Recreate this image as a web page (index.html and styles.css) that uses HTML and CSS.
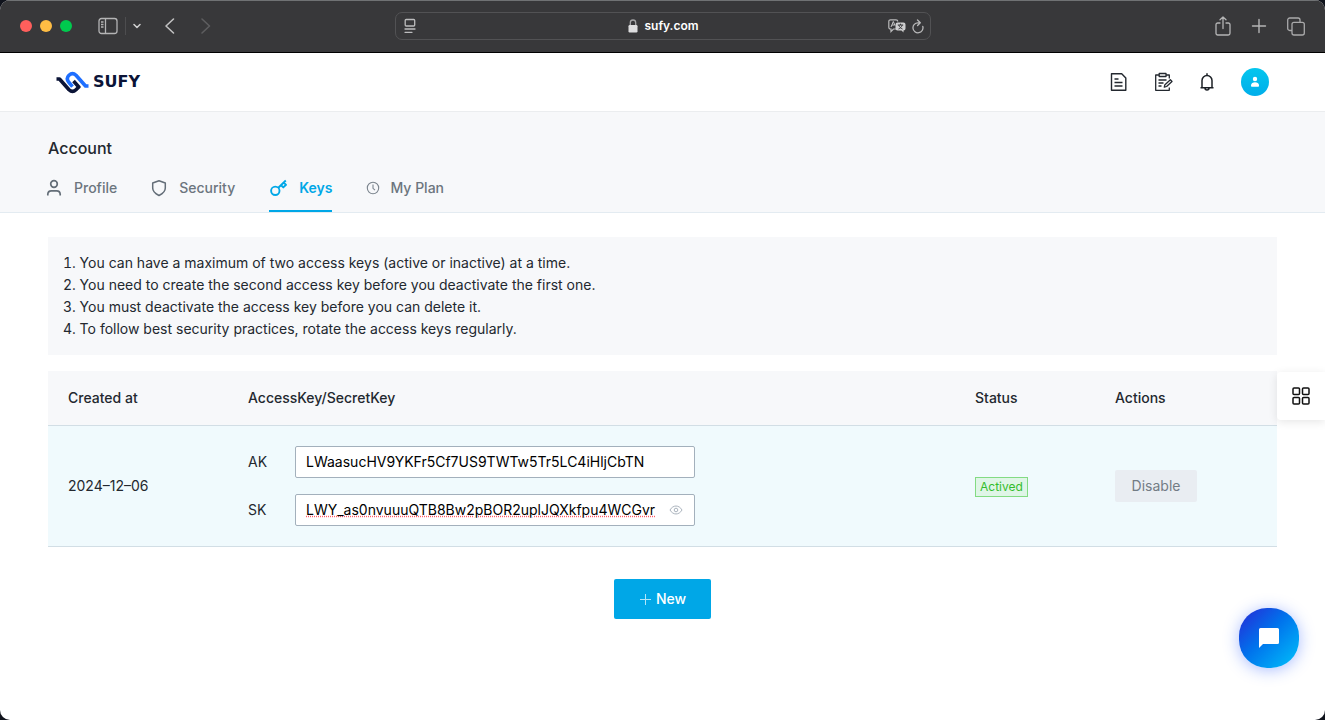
FILE: index.html
```html
<!DOCTYPE html>
<html lang="en">
<head>
<meta charset="utf-8">
<meta name="viewport" content="width=device-width, initial-scale=1">
<title>Account - Keys</title>
<link rel="stylesheet" href="styles.css">
</head>
<body>
<div class="window">
  <div class="toolbar">
    <div class="toolbar-left">
      <span class="lights"><i class="light red"></i><i class="light yellow"></i><i class="light green"></i></span>
      <button class="tool" aria-label="Sidebar"><svg width="20" height="18" viewBox="0 0 20 18" fill="none" stroke="#b4b4b5" stroke-width="1.3"><rect x="1" y="1.5" width="18" height="15" rx="2.5"/><path d="M7.5 1.5v15M3 5h2.5M3 7.5h2.5M3 10h2.5"/></svg></button>
      <span class="tool-divider"></span>
      <button class="tool" aria-label="Tab groups"><svg width="8" height="8" viewBox="0 0 8 8" fill="none" stroke="#d0d0d1" stroke-width="1.5" stroke-linecap="round" stroke-linejoin="round"><path d="M1 2.5l3 3 3-3"/></svg></button>
      <button class="tool tool-back" aria-label="Back"><svg width="12" height="18" viewBox="0 0 12 18" fill="none" stroke="#c0c0c1" stroke-width="1.6" stroke-linecap="round" stroke-linejoin="round"><path d="M9.500 2L2 9l7.500 7"/></svg></button>
      <button class="tool tool-forward" aria-label="Forward" disabled><svg width="12" height="18" viewBox="0 0 12 18" fill="none" stroke="#5d5d5f" stroke-width="1.6" stroke-linecap="round" stroke-linejoin="round"><path d="M2 2l7.500 7L2 16"/></svg></button>
    </div>
    <div class="address">
      <button class="tool" aria-label="Reader"><svg width="12" height="16" viewBox="0 0 12 16" fill="none" stroke="#bdbdbe" stroke-width="1.3" stroke-linecap="round"><rect x="1.200" y="1.500" width="9.500" height="6.500" rx="1"/><path d="M1 11h10M1 14.300h7"/></svg></button>
      <span class="domain"><svg width="10" height="14" viewBox="0 0 10 14"><path d="M2.300 6V3.700a2.700 2.700 0 0 1 5.400 0V6" fill="none" stroke="#a5a5a6" stroke-width="1.3"/><rect x=".5" y="6" width="9" height="7.500" rx="1.200" fill="#dededf"/></svg>sufy.com</span>
      <span class="address-tools">
        <button class="tool" aria-label="Translate"><svg width="18" height="14" viewBox="0 0 18 14" fill="none"><path d="M8 10H5.500L3 12.500V10H2.500A1.700 1.700 0 0 1 .8 8.300V2.500A1.700 1.700 0 0 1 2.500.8H8a1.700 1.700 0 0 1 1.700 1.700" stroke="#b9b9ba" stroke-width="1.200"/><path d="M3 8l2.300-5.500L7 6.500M4 6h2.500" stroke="#c8c8c9"/><path d="M9.500 3.500h6A2 2 0 0 1 17.500 5.500v4a2 2 0 0 1-2 2v2l-2-2h-4a2 2 0 0 1-2-2v-4a2 2 0 0 1 2-2z" fill="#cfcfd0"/><path d="M9.800 6h5.400M12.500 4.700V6M10.800 6c.5 2 2 3.300 3.700 4M14.200 6c-.5 2-2 3.300-3.700 4" stroke="#38383a"/></svg></button>
        <button class="tool" aria-label="Reload"><svg width="12" height="15" viewBox="0 0 12 15" fill="none" stroke="#b9b9ba" stroke-width="1.3" stroke-linecap="round" stroke-linejoin="round"><path d="M10.800 7.500A5 5 0 1 1 6 3.800H8M5.500 1l2.800 2.800-2.700 2.700"/></svg></button>
      </span>
    </div>
    <div class="toolbar-right">
      <button class="tool" aria-label="Share"><svg width="16" height="20" viewBox="0 0 16 20" fill="none" stroke="#b4b4b5" stroke-width="1.300" stroke-linecap="round" stroke-linejoin="round"><path d="M5 7H2.700A1.700 1.700 0 0 0 1 8.700v8.600A1.700 1.700 0 0 0 2.700 19h10.600a1.700 1.700 0 0 0 1.700-1.700V8.700A1.700 1.700 0 0 0 13.300 7H11M8 12.500V1M5 3.800L8 1l3 2.800"/></svg></button>
      <button class="tool" aria-label="New tab"><svg width="16" height="16" viewBox="0 0 16 16" stroke="#b4b4b5" stroke-width="1.400" stroke-linecap="round"><path d="M8 1.500v13M1.500 8h13"/></svg></button>
      <button class="tool" aria-label="Tab overview"><svg width="18" height="19" viewBox="0 0 18 19" fill="none" stroke="#a9a9aa" stroke-width="1.300"><rect x="5" y="5.300" width="12.300" height="12.700" rx="2"/><path d="M5 13.500H2.700a2 2 0 0 1-2-2V3a2 2 0 0 1 2-2H11a2 2 0 0 1 2 2v2.300"/></svg></button>
    </div>
  </div>

  <header class="site-header">
    <a class="logo" href="#" aria-label="Sufy home">
      <svg width="33" height="23" viewBox="0 0 33 23" fill="none" stroke-width="3.600" stroke-linejoin="round"><path d="M.5 8H3.500L13 18.700q3.500 3.300 7 0L22.800 16l-5.300-6" stroke="#0b1437"/><path d="M32.500 15H29.500L20 4.300q-3.500-3.300-7 0c-2.400 2.400-2 5 0 7.200l3.500 4.200" stroke="#1f6fff"/></svg>
      <span class="wordmark">SUFY</span>
    </a>
    <nav class="header-actions" aria-label="Tools">
      <button class="icon-button" aria-label="Documents"><svg width="18" height="20" viewBox="0 0 18 20" fill="none" stroke="#23282f" stroke-width="1.400" stroke-linejoin="round"><path d="M2.500 1.700h10.200L16.800 6v12.300H2.500zM5.500 7h4M5.500 10.500h8M5.500 14h8"/></svg></button>
      <button class="icon-button" aria-label="Feedback"><svg width="20" height="20" viewBox="0 0 20 20" fill="none" stroke="#23282f" stroke-width="1.300" stroke-linejoin="round"><path d="M6 3H2.700v15.300h13.600V15.500M13 3h3.300v3.500M6.200 1.500H13v3H6.200zM5.500 8h8M5.500 11h5M5.500 14h3M11.300 15.200l.6-2.500 5.500-5 1.600 1.800-5.400 5z"/></svg></button>
      <button class="icon-button" aria-label="Notifications"><svg width="16" height="20" viewBox="0 0 16 20" fill="none" stroke="#1c2026" stroke-width="1.500"><path d="M1.500 15.800h13M3 15.800V8.500a5 5 0 0 1 10 0v7.300M8 3.500V1.300M6 16.200a2 1.700 0 0 0 4 0"/></svg></button>
      <button class="avatar" aria-label="User menu"><svg width="10" height="12" viewBox="0 0 10 12" fill="#fff"><circle cx="5" cy="3" r="2.200"/><path d="M1 9.200C1 7.500 3 6.300 5 6.300s4 1.200 4 2.900c0 1-.3 1.500-1.200 1.500H2.200C1.300 10.700 1 10.200 1 9.200z"/></svg></button>
    </nav>
  </header>

  <section class="account">
    <h1 class="account-title">Account</h1>
    <nav class="tabs" aria-label="Account">
      <a class="tab" href="#"><svg width="16" height="18" viewBox="0 0 16 18" fill="none" stroke="#646e78" stroke-width="1.700"><circle cx="8" cy="5" r="3.300"/><path d="M1.800 16.500v-1.300a3.500 3.500 0 0 1 3.500-3.400h5.400a3.500 3.500 0 0 1 3.500 3.400v1.300"/></svg>Profile</a>
      <a class="tab" href="#"><svg width="16" height="18" viewBox="0 0 16 18" fill="none" stroke="#646e78" stroke-width="1.500" stroke-linejoin="round"><path d="M8 1.700L14.300 4v5c0 3.300-2.600 5.700-6.300 7.500C4.300 14.700 1.700 12.300 1.700 9V4z"/></svg>Security</a>
      <a class="tab active" href="#" aria-current="page"><svg width="18" height="18" viewBox="0 0 18 18" fill="none" stroke="#00a7e7" stroke-width="1.900" stroke-linejoin="round"><circle cx="6.300" cy="11.800" r="4.200"/><path d="M9.300 8.800L16.800 1.500M12 6.200l2.300 2.200L17 5.800l-2.300-2.300"/></svg>Keys</a>
      <a class="tab tab-plan" href="#"><svg width="14" height="14" viewBox="0 0 14 14" fill="none" stroke="#7b848d" stroke-width="1.100"><circle cx="7" cy="7" r="5.700"/><path d="M7 3.500V7.300l2 1.900"/></svg>My Plan</a>
    </nav>
  </section>

  <main class="content">
    <ol class="notice">
      <li>You can have a maximum of two access keys (active or inactive) at a time.</li>
      <li>You need to create the second access key before you deactivate the first one.</li>
      <li>You must deactivate the access key before you can delete it.</li>
      <li>To follow best security practices, rotate the access keys regularly.</li>
    </ol>
    <table class="keys">
      <thead>
        <tr><th class="col-created">Created at</th><th>AccessKey/SecretKey</th><th class="col-status">Status</th><th class="col-actions">Actions</th></tr>
      </thead>
      <tbody>
        <tr>
          <td>2024–12–06</td>
          <td>
            <div class="pairs">
              <div class="pair"><label for="ak">AK</label><span class="field"><input id="ak" type="text" value="LWaasucHV9YKFr5Cf7US9TWTw5Tr5LC4iHljCbTN"></span></div>
              <div class="pair"><label for="sk">SK</label><span class="field"><input id="sk" class="misspelled" type="text" value="LWY_as0nvuuuQTB8Bw2pBOR2uplJQXkfpu4WCGvr"><button class="reveal" aria-label="Toggle visibility"><svg width="14" height="10" viewBox="0 0 14 10" fill="none" stroke="#aab3bd"><path d="M1 5c3-5.300 9-5.300 12 0-3 5.300-9 5.300-12 0z"/><circle cx="7" cy="5" r="1.800"/></svg></button></span></div>
            </div>
          </td>
          <td><span class="status">Actived</span></td>
          <td><button class="disable" disabled>Disable</button></td>
        </tr>
      </tbody>
    </table>
    <button class="new-key"><svg width="12" height="12" viewBox="0 0 12 12" stroke="#b3e5f8"><path d="M6.500 1v11M1 6.500h11"/></svg>New</button>
  </main>

  <button class="side-widget" aria-label="Apps"><svg width="18" height="18" viewBox="0 0 18 18" fill="none" stroke="#111" stroke-width="1.500"><rect x="1" y="1" width="6.500" height="6.500" rx="1"/><rect x="10.500" y="1" width="6.500" height="6.500" rx="1"/><rect x="1" y="10.500" width="6.500" height="6.500" rx="1"/><rect x="10.500" y="10.500" width="6.500" height="6.500" rx="1"/></svg></button>
  <button class="chat" aria-label="Open chat"><svg width="20" height="20" viewBox="0 0 20 20" fill="#fff"><path d="M1.500 0h17A1.500 1.500 0 0 1 20 1.500v13a1.500 1.500 0 0 1-1.500 1.500H4l-4 4V1.500A1.500 1.500 0 0 1 1.500 0z"/></svg></button>
</div>
</body>
</html>
```
FILE: styles.css
```css
* { box-sizing: border-box; }
body {
  margin: 0;
  background: #10131c;
  color: #23282f;
  font: 14px/22px Inter, "Liberation Sans", sans-serif;
}
button { padding: 0; border: 0; background: none; font: inherit; color: inherit; }
svg { display: block; flex: none; }
a { color: inherit; text-decoration: none; }

.window {
  display: flex;
  flex-direction: column;
  min-height: 100vh;
  border-radius: 10px;
  overflow: hidden;
  background: #fff;
}

/* Browser toolbar */
.toolbar {
  display: grid;
  grid-template-columns: 1fr 536px 1fr;
  align-items: center;
  height: 53px;
  padding: 0 20px;
  border-bottom: 1px solid #000;
  background: #38383a;
  box-shadow: inset 0 2px 0 -1px #707274;
}
.toolbar-left, .toolbar-right, .lights, .domain, .address-tools { display: flex; align-items: center; }
.lights { gap: 8px; margin-right: 26px; }
.light { width: 12px; height: 12px; border-radius: 50%; }
.red { background: #ff5f5c; }
.yellow { background: #ffbd44; }
.green { background: #00ca4e; }
.tool-divider { width: 1px; height: 18px; margin: 0 7px; background: #4d4d4f; }
.tool-back { margin-left: 23px; }
.tool-forward { margin-left: 24px; }
.address {
  display: grid;
  grid-template-columns: 1fr auto 1fr;
  align-items: center;
  height: 28px;
  padding: 0 6px 0 8px;
  border: 1px solid #525254;
  border-radius: 7px;
}
.domain { gap: 6px; color: #fff; font-size: 12px; font-weight: 600; }
.address-tools { gap: 6px; justify-content: flex-end; }
.toolbar-right { justify-content: flex-end; gap: 20px; }

/* Site header */
.site-header {
  display: flex;
  align-items: center;
  justify-content: space-between;
  height: 59px;
  padding: 0 56px;
  border-bottom: 1px solid #ebedef;
}
.logo { display: flex; align-items: center; gap: 4px; }
.wordmark { color: #0b1437; font: bold 16px/22px "DejaVu Sans", sans-serif; }
.header-actions { display: flex; align-items: center; gap: 26px; }
.avatar {
  display: grid;
  place-items: center;
  width: 28px;
  height: 28px;
  border-radius: 50%;
  background: linear-gradient(#04c6ee, #00aeea);
}

/* Account heading and tabs */
.account { padding: 24px 48px 0; border-bottom: 1px solid #e3ebf1; background: #f7f8fa; }
.account-title { margin: 0; font-size: 16px; line-height: 24px; font-weight: 500; }
.tabs { display: flex; gap: 34px; margin-left: -2px; padding-top: 6px; }
.tab {
  display: flex;
  align-items: center;
  gap: 12px;
  height: 46px;
  border-bottom: 2px solid transparent;
  color: #6c757e;
  font-weight: 500;
}
.tab.active { border-color: #00a7e7; color: #00a7e7; font-weight: 600; }
.tab-plan { gap: 10px; }

/* Page content */
.content { display: flex; flex-direction: column; padding: 24px 48px; }
.notice {
  margin: 0 0 16px;
  padding: 15px;
  background: #f7f8fa;
  list-style-position: inside;
}
.keys { width: 100%; border-collapse: collapse; table-layout: fixed; }
.keys th, .keys td { padding: 0 20px; border-bottom: 1px solid #d2dee5; text-align: left; }
.keys th { height: 54px; background: #f7f8fa; font-weight: 500; }
.keys td { padding: 20px; background: #f0fafd; }
.col-created { width: 180px; }
.col-status { width: 140px; }
.col-actions { width: 182px; }
.pairs { display: grid; gap: 16px; }
.pair { display: grid; grid-template-columns: 47px minmax(0, 400px); align-items: center; }
.field { position: relative; }
.field input {
  display: block;
  width: 100%;
  height: 32px;
  padding: 0 10px;
  border: 1px solid #a3b0bc;
  border-radius: 2px;
  background: #fff;
  color: #000;
  font: inherit;
}
.field .misspelled { padding-right: 32px; text-decoration: underline dotted #ff5c68; }
.reveal { position: absolute; top: 11px; right: 12px; }
.status {
  display: inline-block;
  padding: 0 4px;
  border: 1px solid #83db83;
  background: #dff5e7;
  color: #34bd2c;
  font-size: 12px;
  line-height: 18px;
}
.disable {
  width: 82px;
  height: 32px;
  border-radius: 2px;
  background: #e9edf2;
  color: #737c85;
}
.new-key {
  display: flex;
  align-items: center;
  align-self: center;
  justify-content: center;
  gap: 5px;
  width: 97px;
  height: 40px;
  margin-top: 32px;
  border-radius: 2px;
  background: #00a7e7;
  color: #fff;
  font-weight: 500;
}

/* Floating widgets */
.side-widget {
  position: fixed;
  top: 372px;
  right: 0;
  display: grid;
  place-items: center;
  width: 48px;
  height: 48px;
  border-radius: 4px 0 0 4px;
  background: #fff;
  box-shadow: 0 2px 10px rgba(0, 0, 0, .1);
}
.chat {
  position: fixed;
  right: 26px;
  bottom: 52px;
  display: grid;
  place-items: center;
  width: 60px;
  height: 60px;
  border-radius: 28px;
  background: linear-gradient(135deg, #2330d8 5%, #0072ec 45%, #00b4f8 90%);
  box-shadow: 0 2px 16px rgba(40, 90, 255, .4);
}
```
